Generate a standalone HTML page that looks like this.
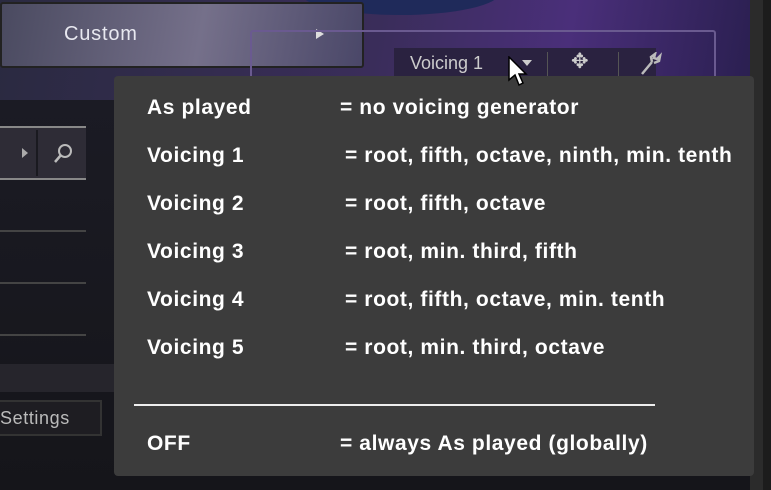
<!DOCTYPE html>
<html><head><style>
body{margin:0;width:771px;height:490px;overflow:hidden;background:#15151a;position:relative;font-family:"Liberation Sans",sans-serif}
div{position:absolute;box-sizing:border-box}
.t{color:#fff;font-size:21px;font-weight:bold;letter-spacing:0.6px;white-space:nowrap;line-height:24px}
</style></head><body>
<div style="left:0;top:0;width:750px;height:100px;background:linear-gradient(100deg,#2a2a40 0%,#3a2d5a 50%,#4a2f7a 75%,#2a1f50 100%)"></div>
<div style="left:300px;top:-30px;width:200px;height:45px;border-radius:50%;background:#1f2a5a"></div>
<div style="left:0;top:2px;width:364px;height:66px;background:linear-gradient(100deg,#4a4a60,#75708a 55%,#4a4768);border:2px solid #222;border-radius:3px"></div>
<div class="t" style="left:64px;top:22px;color:#e8e8f0;font-size:20px;font-weight:normal;letter-spacing:0.8px">Custom</div>
<div style="left:316px;top:29px;width:0;height:0;border-left:8px solid #ddd;border-top:5px solid transparent;border-bottom:5px solid transparent"></div>
<div style="left:250px;top:30px;width:466px;height:70px;border:2px solid #6a5a90;border-radius:3px"></div>
<div style="left:394px;top:48px;width:262px;height:30px;background:#2a2240"></div>
<div class="t" style="left:410px;top:51px;font-size:18px;font-weight:normal;letter-spacing:0;color:#ccc">Voicing 1</div>
<div style="left:522px;top:60px;width:0;height:0;border-top:6px solid #ccc;border-left:5px solid transparent;border-right:5px solid transparent"></div>
<div style="left:547px;top:52px;width:1px;height:24px;background:#555"></div>
<div style="left:618px;top:52px;width:1px;height:24px;background:#555"></div>
<div class="t" style="left:571px;top:50px;color:#ccc;font-weight:normal">✥</div>
<svg style="position:absolute;left:638px;top:52px" width="24" height="24" viewBox="0 0 24 24"><path d="M4 22 L14 10 M14 10 L13 5 L17 2 L16 6 L19 7 L22 4 L21 9 L16 11" stroke="#bbb" stroke-width="2.5" fill="none"/></svg>
<div style="left:0;top:100px;width:114px;height:390px;background:linear-gradient(#1b1b24,#15151a)"></div>
<div style="left:0;top:126px;width:86px;height:2px;background:#888"></div>
<div style="left:0;top:178px;width:86px;height:2px;background:#888"></div>
<div style="left:0;top:128px;width:86px;height:50px;background:#2e2c36"></div>
<div style="left:36px;top:130px;width:2px;height:46px;background:#1a1a20"></div>
<div style="left:22px;top:148px;width:0;height:0;border-left:6px solid #aaa;border-top:5px solid transparent;border-bottom:5px solid transparent"></div>
<svg style="position:absolute;left:52px;top:143px" width="22" height="22" viewBox="0 0 22 22"><circle cx="13" cy="8" r="6" stroke="#bbb" stroke-width="2" fill="none"/><path d="M9 12 L3 19" stroke="#bbb" stroke-width="2.5"/></svg>
<div style="left:0;top:230px;width:86px;height:2px;background:#444"></div>
<div style="left:0;top:282px;width:86px;height:2px;background:#444"></div>
<div style="left:0;top:334px;width:86px;height:2px;background:#444"></div>
<div style="left:0;top:364px;width:114px;height:28px;background:#26252c"></div>
<div style="left:-4px;top:400px;width:106px;height:36px;background:#1e1d22;border:2px solid #333"></div>
<div class="t" style="left:0;top:406px;color:#bbb;font-size:18px;font-weight:normal">Settings</div>
<div style="left:750px;top:0;width:13px;height:490px;background:#2b2b2b"></div>
<div style="left:763px;top:0;width:8px;height:490px;background:#1c1c1c"></div>
<div style="left:114px;top:76px;width:640px;height:400px;background:#3c3c3c;border-radius:4px"></div>
<div class="t" style="left:147px;top:96px">As played</div><div class="t" style="left:340px;top:96px">= no voicing generator</div>
<div class="t" style="left:147px;top:144px">Voicing 1</div><div class="t" style="left:345px;top:144px">= root, fifth, octave, ninth, min. tenth</div>
<div class="t" style="left:147px;top:192px">Voicing 2</div><div class="t" style="left:345px;top:192px">= root, fifth, octave</div>
<div class="t" style="left:147px;top:240px">Voicing 3</div><div class="t" style="left:345px;top:240px">= root, min. third, fifth</div>
<div class="t" style="left:147px;top:288px">Voicing 4</div><div class="t" style="left:345px;top:288px">= root, fifth, octave, min. tenth</div>
<div class="t" style="left:147px;top:336px">Voicing 5</div><div class="t" style="left:345px;top:336px">= root, min. third, octave</div>
<div style="left:134px;top:404px;width:521px;height:2px;background:#eee"></div>
<div class="t" style="left:147px;top:432px">OFF</div><div class="t" style="left:340px;top:432px">= always As played (globally)</div>
<svg style="position:absolute;left:508px;top:56px" width="22" height="34" viewBox="0 0 22 34"><path d="M1 1 L1 24 L7 19 L11 29 L15 27 L11 18 L18 18 Z" fill="#fff" stroke="#000" stroke-width="1.5"/></svg>
</body></html>
